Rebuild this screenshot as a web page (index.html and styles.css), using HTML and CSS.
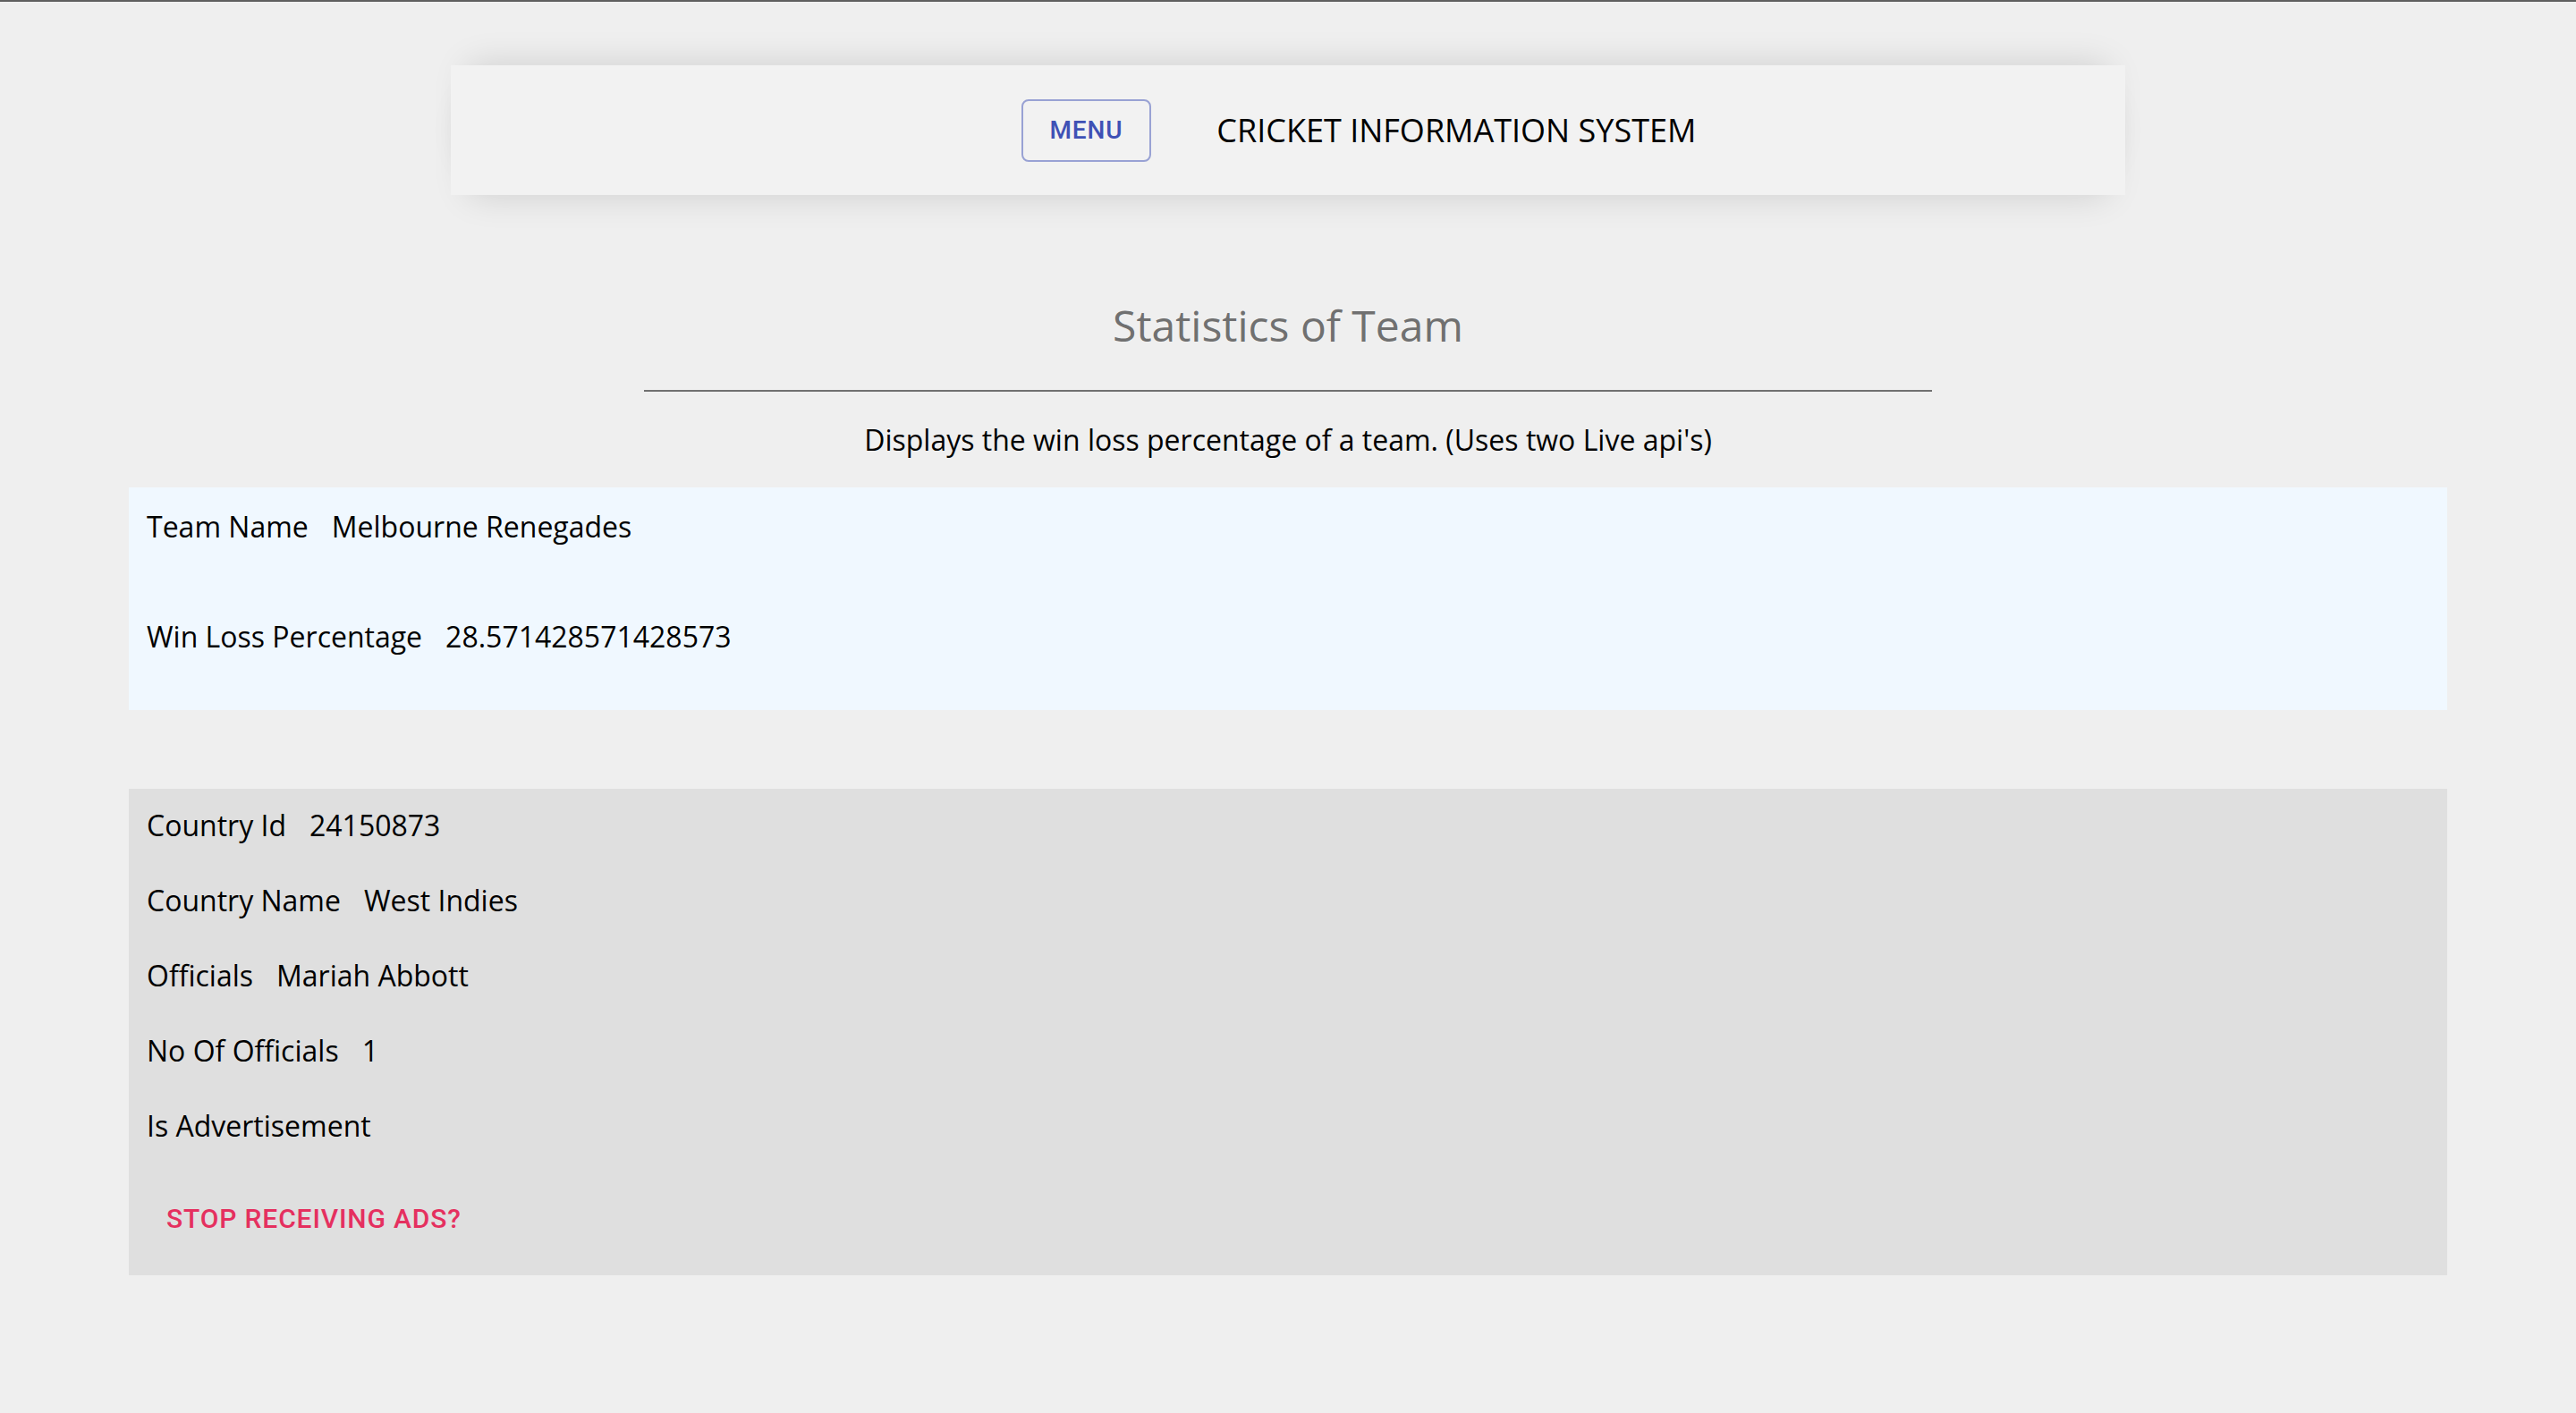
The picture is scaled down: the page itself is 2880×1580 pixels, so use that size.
FILE: index.html
```
<!DOCTYPE html>
<html lang="en">
<head>
<meta charset="utf-8">
<title>Cricket Information System</title>
<link rel="stylesheet" href="styles.css">
</head>
<body>
<div class="app">
  <header class="topbar">
    <button class="menu-btn" type="button">Menu</button>
    <h1 class="app-title">CRICKET INFORMATION SYSTEM</h1>
  </header>
  <main class="content">
    <h2 class="page-title">Statistics of Team</h2>
    <hr class="divider">
    <p class="subtitle">Displays the win loss percentage of a team. (Uses two Live api's)</p>
    <section class="team-card">
      <p class="row"><span class="label">Team Name</span><span class="value">Melbourne Renegades</span></p>
      <p class="row row-far"><span class="label">Win Loss Percentage</span><span class="value">28.571428571428573</span></p>
    </section>
    <section class="country-card">
      <p class="row"><span class="label">Country Id</span><span class="value">24150873</span></p>
      <p class="row"><span class="label">Country Name</span><span class="value">West Indies</span></p>
      <p class="row"><span class="label">Officials</span><span class="value">Mariah Abbott</span></p>
      <p class="row"><span class="label">No Of Officials</span><span class="value">1</span></p>
      <p class="row"><span class="label">Is Advertisement</span></p>
      <div class="ads-wrap"><button class="ads-btn" type="button">Stop receiving ads?</button></div>
    </section>
  </main>
</div>
</body>
</html>
```
FILE: styles.css
```
html {
  background: #efefef;
}
body {
  margin: 0;
  min-height: 1578px;
  border-top: 2px solid #5f5f5f;
  background: #efefef;
  font-family: "Open Sans", "DejaVu Sans", sans-serif;
  color: #000;
}
.app {
  display: flex;
  flex-direction: column;
}
.topbar {
  box-sizing: border-box;
  width: 65%;
  height: 145px;
  margin: 71px auto 0;
  padding-left: 158px;
  display: flex;
  align-items: center;
  justify-content: center;
  gap: 73px;
  background: #f2f2f2;
  box-shadow: 0 -20px 40px -20px rgba(0, 0, 0, 0.14), 0 20px 40px -20px rgba(0, 0, 0, 0.14);
}
.menu-btn {
  box-sizing: border-box;
  height: 70px;
  padding: 0 30px;
  border: 2px solid rgba(63, 81, 181, 0.5);
  border-radius: 8px;
  background: transparent;
  color: #3f51b5;
  font-family: Roboto, "Liberation Sans", sans-serif;
  font-weight: 500;
  font-size: 28px;
  letter-spacing: 0.8px;
  line-height: 49px;
  text-transform: uppercase;
}
.app-title {
  margin: 0;
  font-size: 36px;
  font-weight: 400;
  line-height: 49px;
  color: #000;
}
.content {
  display: flex;
  flex-direction: column;
}
.page-title {
  margin: 113px 0 0;
  text-align: center;
  font-size: 48px;
  font-weight: 400;
  line-height: 66px;
  color: #707070;
}
.divider {
  width: 50%;
  height: 2px;
  margin: 39px auto 0;
  border: 0;
  background: #707070;
}
.subtitle {
  margin: 32px 0 31px;
  text-align: center;
  font-size: 32px;
  line-height: 44px;
}
.team-card,
.country-card {
  box-sizing: border-box;
  width: 90%;
  margin: 0 auto;
}
.team-card {
  padding: 22px 20px 60px;
  background: #f0f8ff;
}
.country-card {
  margin-top: 88px;
  padding: 19px 20px 20px;
  background: #dfdfdf;
}
.row {
  margin: 0;
  font-size: 32px;
  line-height: 44px;
}
.team-card .row-far {
  margin-top: 79px;
}
.country-card .row + .row {
  margin-top: 40px;
}
.value {
  margin-left: 26px;
}
.ads-wrap {
  margin-top: 40px;
}
.ads-btn {
  display: inline-flex;
  padding: 16px 22px;
  border: 0;
  background: transparent;
  color: #e5305f;
  font-family: Roboto, "Liberation Sans", sans-serif;
  font-weight: 500;
  font-size: 30px;
  letter-spacing: 0.86px;
  line-height: 52.5px;
  text-transform: uppercase;
}
```
